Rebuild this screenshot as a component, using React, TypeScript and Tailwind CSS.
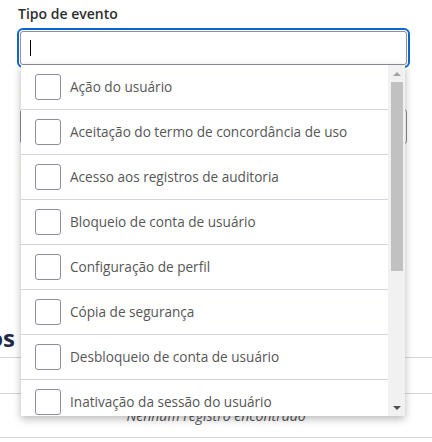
import React from 'react';

const eventTypes = [
  'Ação do usuário',
  'Aceitação do termo de concordância de uso',
  'Acesso aos registros de auditoria',
  'Bloqueio de conta de usuário',
  'Configuração de perfil',
  'Cópia de segurança',
  'Desbloqueio de conta de usuário',
  'Inativação da sessão do usuário',
  'Login do usuário',
  'Logout do usuário',
];

const EventTypeDropdown = () => {
  return (
    <div className="absolute left-[1px] top-[34px] w-[384px] h-[351px] bg-white flex shadow-[0_3px_8px_rgba(0,0,0,0.28)] z-10">
      {/* options */}
      <div className="flex-1 overflow-hidden">
        {eventTypes.map((item) => (
          <div
            key={item}
            className="h-[45px] flex items-center border-b border-[#d5d5df] shrink-0"
          >
            <div className="w-[26px] h-[26px] ml-[14px] border border-[#8e8e9c] rounded-[3px] bg-white shrink-0" />
            <span className="ml-[9px] text-[13.6px] text-[#565656] whitespace-nowrap">
              {item}
            </span>
          </div>
        ))}
      </div>

      {/* scrollbar */}
      <div className="w-[17px] bg-[#f1f1f1] flex flex-col items-center">
        <div className="h-[17px] flex items-center justify-center">
          <div className="w-0 h-0 border-l-[4px] border-r-[4px] border-b-[4px] border-l-transparent border-r-transparent border-b-[#a3a3a3]" />
        </div>
        <div className="w-[12px] h-[189px] bg-[#c1c1c1]" />
        <div className="flex-1" />
        <div className="h-[17px] flex items-center justify-center">
          <div className="w-0 h-0 border-l-[4px] border-r-[4px] border-t-[4px] border-l-transparent border-r-transparent border-t-[#505050]" />
        </div>
      </div>
    </div>
  );
};

export default function App() {
  return (
    <div className="relative w-[432px] h-[442px] overflow-hidden bg-white font-['Open_Sans',sans-serif]">
      <div className="pl-[20px] pr-[25px] pt-[4px]">
        {/* tipo de evento */}
        <label className="block -ml-[2px] text-[14px] leading-[20px] font-semibold text-[#2e2e2e]">
          Tipo de evento
        </label>
        <div className="relative mt-[7px]">
          <div className="h-[34px] border border-[#8e8e9c] rounded-[3px] outline-2 outline-offset-1 outline-[#0b66d0] flex items-center pl-[9px]">
            <div className="w-[1px] h-[16px] bg-black" />
          </div>
          <EventTypeDropdown />
        </div>

        {/* campos atrás do dropdown */}
        <label className="block mt-[17px] text-[14px] leading-[20px] font-semibold text-[#2e2e2e]">
          Usuário
        </label>
        <div className="mt-[7px] h-[35px] border border-[#8e8e9c] rounded-[3px]" />
        <label className="block mt-[16px] text-[14px] leading-[20px] font-semibold text-[#2e2e2e]">
          Período
        </label>
      </div>

      {/* resultados */}
      <div className="mt-[143px] w-[15px] flex justify-end">
        <h2 className="whitespace-nowrap text-[24px] leading-[30px] font-bold text-[#1f2a44]">
          Resultados
        </h2>
      </div>
      <div className="mt-[4px] border-t border-[#d5d5df] h-[36px]" />
      <div className="border-t border-[#d5d5df] h-[44px] flex items-center justify-center">
        <span className="italic text-[14px] text-[#555]">Nenhum registro encontrado</span>
      </div>
      <div className="border-t border-[#d5d5df]" />
    </div>
  );
}
